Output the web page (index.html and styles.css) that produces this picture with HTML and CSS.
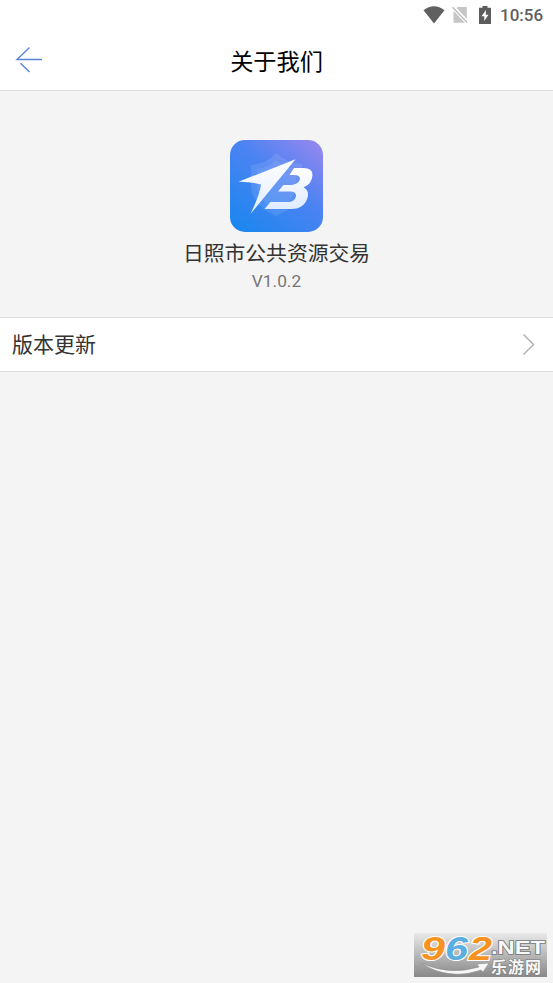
FILE: index.html
```html
<!DOCTYPE html>
<html lang="zh-CN">
<head>
<meta charset="utf-8">
<title>关于我们</title>
<link rel="stylesheet" href="styles.css">
</head>
<body>
<div class="status">
  <svg class="wifi" width="22" height="18" viewBox="0 0 22 18"><path d="M.5 4.200Q11-3.800 21.500 4.200L11 17.500Z" fill="#606060"/></svg>
  <svg class="sim" width="16" height="18" viewBox="0 0 16 18"><path d="M5.500 1H14.800V12.700L4.500 2.100ZM1.500 4.800L12.900 16.800H1.500Z" fill="#c6c6c6"/><path d="M.6 1.200L15.300 16.600" stroke="#b8b8b8" stroke-width="1.300"/></svg>
  <svg class="battery" width="12" height="18" viewBox="0 0 12 18"><path d="M3.500 0H8.500V1.800H12V18H0V1.800H3.500Z" fill="#5c5c5c"/><path d="M7 4L2.500 10.200H5.300V15L9.500 8.700H6.800Z" fill="#fff"/></svg>
  <span class="time">10:56</span>
</div>
<header class="header">
  <svg class="back" width="28" height="28" viewBox="0 0 28 28" fill="none" stroke="#5b85d2" stroke-width="1.400"><path d="M14.500 1.500L2 13.500H27M5.500 17.200L14.500 26"/></svg>
  <h1 class="title">关于我们</h1>
</header>
<main>
  <section class="about">
    <svg class="logo" width="93" height="92" viewBox="0 0 93 92">
      <defs>
        <linearGradient id="bg" x1=".15" y1="1" x2="1" y2="0"><stop offset="0" stop-color="#1e86f0"/><stop offset=".55" stop-color="#4d83f2"/><stop offset="1" stop-color="#9b87ef"/></linearGradient>
        <linearGradient id="mark" x1="0" y1="0" x2="0" y2="1"><stop offset="0" stop-color="#fff"/><stop offset="1" stop-color="#e1ebff"/></linearGradient>
      </defs>
      <rect width="93" height="92" rx="15" fill="url(#bg)"/>
      <path d="M46 13Q56 23 72 24V46Q71 66 46 76Q22 66 21 46V25Q37 24 46 13Z" fill="#fff" opacity=".1"/>
      <path d="M46 20Q54 28 66 29V46Q65 61 46 69Q28 61 27 46V29Q39 28 46 20Z" fill="#fff" opacity=".08"/>
      <path d="M65.500 19.200L8.500 41.800Q20 41.500 31 44.500Q30 54 20.500 74Z" fill="url(#mark)"/>
      <path d="M64 28H73.500Q82.500 28 82.500 35Q82 44 73.500 47.500Q78.500 49.500 78 56Q75 69 61 69H34.500L40.500 62H57.500Q64.500 62 66 56.500Q66.500 51.500 60 51.500H48L53.500 45H61.500Q69 44 70 39Q70 35 64 35H59.500Z" fill="url(#mark)"/>
    </svg>
    <div class="name">日照市公共资源交易</div>
    <div class="version">V1.0.2</div>
  </section>
  <div class="row">
    <span class="label">版本更新</span>
    <svg width="14" height="24" viewBox="0 0 14 24" fill="none" stroke="#aeaeae" stroke-width="1.400"><path d="M2.500 1.500L12.500 11.500L2.500 21.500"/></svg>
  </div>
</main>
<svg class="watermark" width="133" height="44" viewBox="0 0 133 44">
  <defs><linearGradient id="wm" x1="0" y1="0" x2="0" y2="1"><stop offset="0" stop-color="#e9e9e9"/><stop offset=".5" stop-color="#b8b8b8"/><stop offset="1" stop-color="#888"/></linearGradient></defs>
  <rect width="133" height="44" fill="url(#wm)"/>
  <path d="M7 30Q35 43 65 34L63 31L75 30L69 39L67 37Q34 48 7 30Z" fill="#f6f6f6" stroke="#888" stroke-width=".5"/>
  <g class="digits">
    <text x="7" y="27" textLength="24" lengthAdjust="spacingAndGlyphs" fill="#f7931e">9</text>
    <text x="31" y="27" textLength="23" lengthAdjust="spacingAndGlyphs" fill="#5baee0">6</text>
    <text x="55" y="27" textLength="23" lengthAdjust="spacingAndGlyphs" fill="#f7931e">2</text>
  </g>
  <text class="net" x="77" y="21" textLength="54" lengthAdjust="spacingAndGlyphs">.NET</text>
  <text class="site" x="77" y="39.500" textLength="50">乐游网</text>
</svg>
</body>
</html>
```
FILE: styles.css
```css
* { box-sizing: border-box; }
body {
  margin: 0;
  min-height: 983px;
  background: #f4f4f4;
  color: #333;
  font-family: Roboto, "Noto Sans CJK SC", sans-serif;
}
.status {
  height: 30px;
  padding-right: 10px;
  display: flex;
  align-items: center;
  justify-content: flex-end;
  background: #fff;
}
.wifi { margin-right: 7px; }
.sim { margin-right: 11px; }
.battery { margin-right: 9px; }
.time {
  width: 43px;
  font-size: 17px;
  font-weight: 500;
  line-height: 30px;
  color: #606060;
  white-space: nowrap;
}
.header {
  height: 61px;
  padding: 0 15px;
  display: grid;
  grid-template-columns: 28px 1fr 28px;
  align-items: center;
  background: #fff;
  border-bottom: 1px solid #dedede;
}
.title {
  margin: 3px 0 0;
  font-size: 23.2px;
  font-weight: 400;
  line-height: 34px;
  text-align: center;
  color: #000;
}
.about {
  height: 226px;
  padding-top: 49px;
  display: flex;
  flex-direction: column;
  align-items: center;
}
.name {
  margin-top: 6px;
  font-size: 20.8px;
  line-height: 32px;
}
.version {
  font-size: 17.3px;
  line-height: 22px;
  color: #777;
}
.row {
  height: 55px;
  padding: 0 18px 0 12px;
  display: flex;
  align-items: center;
  justify-content: space-between;
  background: #fff;
  border-top: 1px solid #dedede;
  border-bottom: 1px solid #dedede;
  font-size: 21px;
}
.label { margin-bottom: 3px; }
.watermark {
  position: absolute;
  left: 414px;
  top: 933px;
  overflow: visible;
}
.digits {
  font: italic 700 33px "Liberation Sans", sans-serif;
  stroke: #fff;
  stroke-width: 2px;
  paint-order: stroke;
}
.net {
  font: 700 18.5px "Liberation Sans", sans-serif;
  fill: #f8f8f8;
  stroke: #777;
  stroke-width: 1.5px;
  paint-order: stroke;
}
.site {
  font: 700 16px "Noto Sans CJK SC", sans-serif;
  fill: #f8f8f8;
  stroke: #777;
  stroke-width: 1px;
  paint-order: stroke;
}
```
